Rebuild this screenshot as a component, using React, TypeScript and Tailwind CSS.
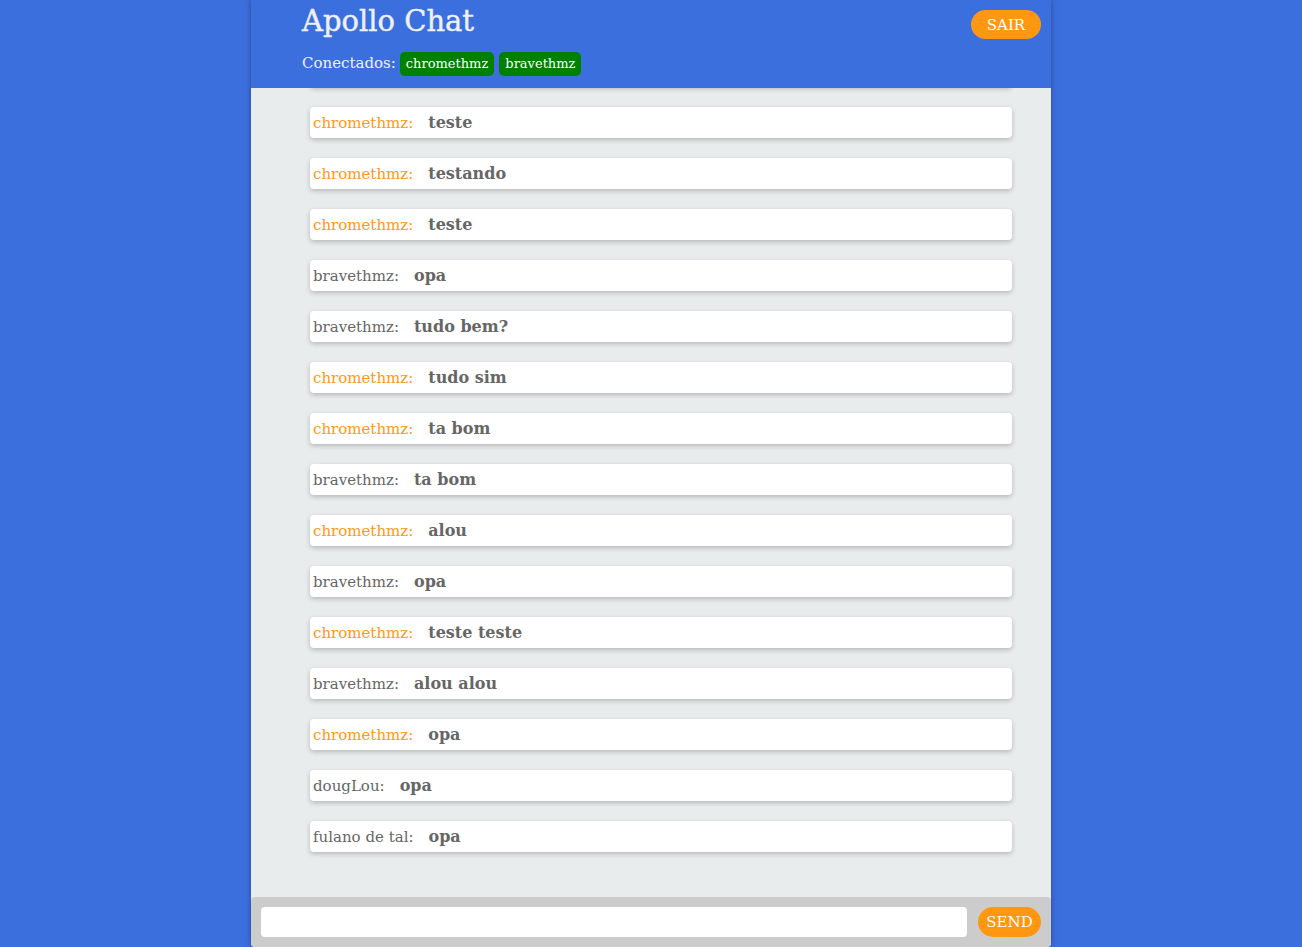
import React from "react";

const msgs: [string, string][] = [
  ["chromethmz", "teste"],
  ["chromethmz", "testando"],
  ["chromethmz", "teste"],
  ["bravethmz", "opa"],
  ["bravethmz", "tudo bem?"],
  ["chromethmz", "tudo sim"],
  ["chromethmz", "ta bom"],
  ["bravethmz", "ta bom"],
  ["chromethmz", "alou"],
  ["bravethmz", "opa"],
  ["chromethmz", "teste teste"],
  ["bravethmz", "alou alou"],
  ["chromethmz", "opa"],
  ["dougLou", "opa"],
  ["fulano de tal", "opa"],
];

export default function App() {
  return (
    <div
      className="min-h-[947px] w-full bg-[#3c6fde] flex justify-center"
      style={{ fontFamily: '"DejaVu Serif", serif' }}
    >
      <div className="w-[800px] h-[947px] flex flex-col bg-[#e9eced] shadow-[0_0_6px_rgba(0,0,0,0.35)] rounded-b-[4px] overflow-hidden">
        <header className="h-[88px] shrink-0 bg-[#3c6fde] relative z-10 flex justify-between pl-[51px] pr-[10px]">
          <div className="flex flex-col">
            <h1 className="text-[29px] leading-[40px] mt-[1px] text-[#eef1fb] [-webkit-text-stroke:0.4px_#eef1fb]">Apollo Chat</h1>
            <div className="flex items-center mt-[11px] h-[24px]">
              <span className="mr-[4px] -mt-[2px] text-[15px] leading-[20px] text-[#eef1fb]">Conectados:</span>
              <span className="bg-[#008000] text-white text-[13px] leading-[16px] rounded-[5px] h-[24px] px-[6px] flex items-center mr-[5px]">chromethmz</span>
              <span className="bg-[#008000] text-white text-[13px] leading-[16px] rounded-[5px] h-[24px] px-[6px] flex items-center">bravethmz</span>
            </div>
          </div>
          <button className="mt-[10px] h-[29px] w-[70px] rounded-full bg-[#ff9810] text-white text-[15px] leading-[20px] flex items-center justify-center">
            SAIR
          </button>
        </header>
        <main className="flex-1 overflow-hidden">
          <div className="flex flex-col gap-[20px] pl-[59px] pr-[39px] -mt-[32px]">
            <div className="h-[31px] bg-white rounded-[4px] shadow-[0_2px_5px_rgba(0,0,0,0.22)]" />
            {msgs.map(([u, t], i) => (
              <div
                key={i}
                className="h-[31px] bg-white rounded-[4px] shadow-[0_2px_5px_rgba(0,0,0,0.22)] flex items-center px-[3px]"
              >
                <span
                  className={
                    "text-[15px] leading-[20px] mr-[15px] " +
                    (u === "chromethmz" ? "text-[#ff9812]" : "text-[#666666]")
                  }
                >
                  {u}:
                </span>
                <span className="text-[16px] leading-[22px] font-bold text-[#666666]">{t}</span>
              </div>
            ))}
          </div>
        </main>
        <footer className="h-[50px] shrink-0 bg-[#cccccc] rounded-t-[4px] flex items-center px-[10px] gap-[11px]">
          <input className="flex-1 h-[30px] bg-white rounded-[4px] outline-none px-2" />
          <button className="h-[30px] w-[63px] rounded-full bg-[#ff9810] text-white text-[15px] leading-[20px] flex items-center justify-center">
            SEND
          </button>
        </footer>
      </div>
    </div>
  );
}
